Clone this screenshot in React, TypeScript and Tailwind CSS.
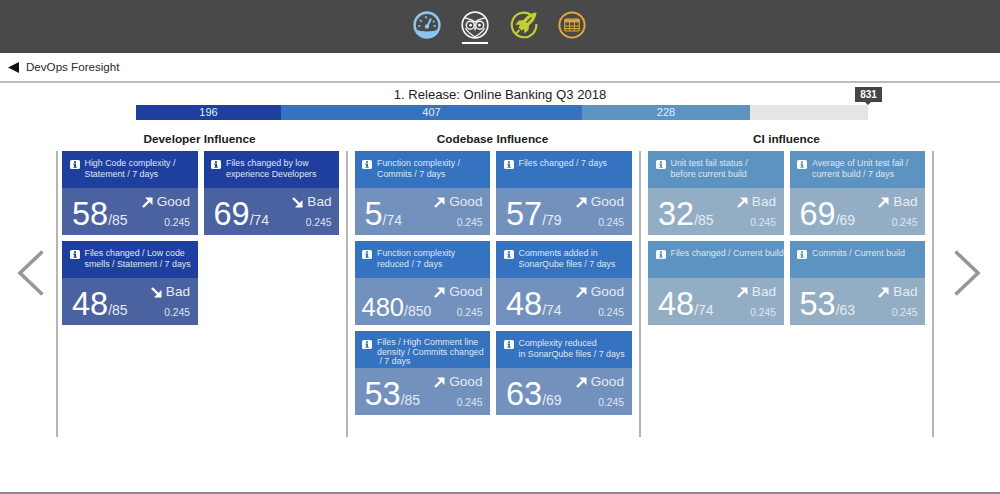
import React from "react";

type Card = { title: string; v: string; max: string; dir: "up" | "down"; label: string };

const Arrow = ({ dir }: { dir: "up" | "down" }) => (
  <svg width="11" height="11" viewBox="0 0 11 11" className="mr-[4px]">
    {dir === "up" ? (
      <>
        <path d="M1 10 L7 4" fill="none" stroke="#fff" strokeWidth="2.4" />
        <path d="M3 0.5 H10.5 V8 Z" fill="#fff" />
      </>
    ) : (
      <>
        <path d="M1 1 L7 7" fill="none" stroke="#fff" strokeWidth="2.4" />
        <path d="M3 10.5 H10.5 V3 Z" fill="#fff" />
      </>
    )}
  </svg>
);

const Info = () => (
  <svg width="10" height="9" viewBox="0 0 10 9" className="shrink-0 mt-[1.5px]">
    <rect x="0" y="0" width="10" height="9" rx="1.6" fill="#fff" />
    <rect x="4" y="1.2" width="2" height="1.6" fill="currentColor" />
    <path d="M3.4 3.6 H6 V6.7 H6.8 V7.8 H3.4 V6.7 H4.1 V4.7 H3.4 Z" fill="currentColor" />
  </svg>
);

const Tile = ({ c, head, body }: { c: Card; head: string; body: string }) => {
  const wide = c.v.length > 2;
  const threeLines = c.title.split("\n").length > 2;
  return (
    <div className="h-[84px] flex flex-col text-white">
      <div className={`h-[37px] flex gap-[5px] pl-[7.5px] pt-[7px] ${head}`}>
        <Info />
        <div className={`text-[8.85px] text-[#dfe6f2] whitespace-pre ${threeLines ? "leading-[9.6px]" : "leading-[10.7px]"}`}>{c.title}</div>
      </div>
      <div className={`h-[47px] flex justify-between pr-[7.5px] ${body} ${wide ? "pl-[7px]" : "pl-[10px]"}`}>
        <div className={`flex items-baseline ${wide ? "pt-[10.5px]" : "pt-[8px]"}`}>
          <span className={`leading-[36px] ${wide ? "text-[25.5px]" : "text-[32.5px]"}`}>{c.v}</span>
          <span className="text-[14px] text-[#e6ebf4]">/{c.max}</span>
        </div>
        <div className="flex flex-col items-end pt-[6px]">
          <div className="flex items-center text-[13.6px] leading-[16px] text-[#e6ebf4]">
            <Arrow dir={c.dir} />
            {c.label}
          </div>
          <div className="text-[10.3px] leading-[12px] mt-[7px] text-[#dfe6f2]">0.245</div>
        </div>
      </div>
    </div>
  );
};

const Column = ({
  title, cards, head, body, width, inner, titlePad, last,
}: { title: string; cards: Card[]; head: string; body: string; width: string; inner: string; titlePad?: string; last?: boolean }) => (
  <div className={width}>
    <div className={`h-[26px] text-center text-[11.8px] font-bold leading-[28px] text-[#1a1a1a] ${titlePad ?? ""}`}>{title}</div>
    <div className={`h-[286px] border-l-2 border-[#b5b5b5] ${inner} ${last ? "border-r-2" : ""}`}>
      <div className="grid grid-cols-[135.5px_135.5px] gap-[6px]">
        {cards.map((c, i) => (
          <Tile key={i} c={c} head={head} body={body} />
        ))}
      </div>
    </div>
  </div>
);

const dev: Card[] = [
  { title: "High Code complexity /\nStatement / 7 days", v: "58", max: "85", dir: "up", label: "Good" },
  { title: "Files changed by low\nexperience Developers", v: "69", max: "74", dir: "down", label: "Bad" },
  { title: "Files changed / Low code\nsmells / Statement / 7 days", v: "48", max: "85", dir: "down", label: "Bad" },
];
const code: Card[] = [
  { title: "Function complexity /\nCommits / 7 days", v: "5", max: "74", dir: "up", label: "Good" },
  { title: "Files changed / 7 days", v: "57", max: "79", dir: "up", label: "Good" },
  { title: "Function complexity\nreduced / 7 days", v: "480", max: "850", dir: "up", label: "Good" },
  { title: "Comments added in\nSonarQube files / 7 days", v: "48", max: "74", dir: "up", label: "Good" },
  { title: "Files / High Comment line\ndensity / Commits changed\n / 7 days", v: "53", max: "85", dir: "up", label: "Good" },
  { title: "Complexity reduced\nin SonarQube files / 7 days", v: "63", max: "69", dir: "up", label: "Good" },
];
const ci: Card[] = [
  { title: "Unit test fail status /\nbefore current build", v: "32", max: "85", dir: "up", label: "Bad" },
  { title: "Average of Unit test fail /\ncurrent build / 7 days", v: "69", max: "69", dir: "up", label: "Bad" },
  { title: "Files changed / Current build", v: "48", max: "74", dir: "up", label: "Bad" },
  { title: "Commits / Current build", v: "53", max: "63", dir: "up", label: "Bad" },
];

const Chevron = ({ right }: { right?: boolean }) => (
  <svg width="28" height="46" viewBox="0 0 28 46">
    <path d={right ? "M2.5 1.5 L25 23 L2.5 44.5" : "M25.5 1.5 L3 23 L25.5 44.5"} fill="none" stroke="#979797" strokeWidth="3.6" />
  </svg>
);

const Gauge = () => (
  <svg width="28" height="28" viewBox="0 0 28 28">
    <circle cx="14" cy="14" r="12.4" fill="none" stroke="#8cc4ec" strokeWidth="2.6" />
    <path d="M2.5 18.5 C8 21 20 21 25.5 18.5 C24 23.5 19 26.5 14 26.5 C9 26.5 4 23.5 2.5 18.5 Z" fill="#8cc4ec" />
    <path d="M14.5 15 L18 7.5" stroke="#8cc4ec" strokeWidth="2" />
    <circle cx="14" cy="15.5" r="2.2" fill="#8cc4ec" />
    <path d="M5 15 H7.5 M6.8 9.2 L8.8 10.6 M13 5 V7.5 M21.5 10 L19.8 11.2 M23 15 H20.5" stroke="#8cc4ec" strokeWidth="1.6" />
  </svg>
);
const Owl = () => (
  <svg width="28" height="28" viewBox="0 0 28 28">
    <circle cx="14" cy="14" r="12.8" fill="none" stroke="#f2f2f2" strokeWidth="1.7" />
    <path d="M3 6.5 C7 8 10.5 8 14 11 C17.5 8 21 8 25 6.5" fill="none" stroke="#f2f2f2" strokeWidth="1.5" />
    <path d="M4.5 17 C6 21 10 23 14 26 C18 23 22 21 23.5 17" fill="none" stroke="#f2f2f2" strokeWidth="1.3" />
    <circle cx="9.3" cy="14.2" r="4" fill="none" stroke="#f2f2f2" strokeWidth="1.5" />
    <circle cx="18.7" cy="14.2" r="4" fill="none" stroke="#f2f2f2" strokeWidth="1.5" />
    <circle cx="9.6" cy="14.2" r="1.4" fill="#f2f2f2" />
    <circle cx="18.4" cy="14.2" r="1.4" fill="#f2f2f2" />
    <path d="M14 15 L13 17.5 L14 20.5 L15 17.5 Z" fill="#f2f2f2" />
  </svg>
);
const Rocket = () => (
  <svg width="28" height="28" viewBox="0 0 28 28">
    <path d="M20.5 3.5 A12.3 12.3 0 1 0 26.3 13" fill="none" stroke="#c3cf2e" strokeWidth="2.1" />
    <path d="M26.5 1.5 C21 2 16.5 5 13.5 9 L9 9.5 L5.5 13.5 L10 14 L8.5 16.5 L11.5 19.5 L14 18 L14.5 22.5 L18.5 19 L19 14.5 C23 11.5 26 7 26.5 1.5 Z" fill="#c3cf2e" />
    <path d="M16.5 11.5 L21.5 6.5" stroke="#494949" strokeWidth="1.4" />
    <path d="M6 22.5 L9.5 19" stroke="#c3cf2e" strokeWidth="1.8" />
  </svg>
);
const Table = () => (
  <svg width="28" height="28" viewBox="0 0 28 28">
    <circle cx="14" cy="14" r="12.6" fill="none" stroke="#e4a63a" strokeWidth="2" />
    <rect x="6.8" y="8" width="14.4" height="12" rx="1" fill="none" stroke="#e4a63a" strokeWidth="1.2" />
    <path d="M6.8 8.3 H21.2 V11.4 H6.8 Z" fill="#e4a63a" />
    <path d="M7 15 H21 M7 17.6 H21 M11.6 11 V20 M16.4 11 V20" stroke="#e4a63a" strokeWidth="1" />
  </svg>
);

export default function App() {
  return (
    <div className="w-[1000px] h-[494px] overflow-hidden bg-white flex flex-col border-b-2 border-[#8a8a8a]" style={{ fontFamily: '"Liberation Sans", Arial, sans-serif' }}>
      <header className="h-[53px] bg-[#494949] flex justify-center items-start gap-[20.5px] pr-[1px] pt-[10.5px] shrink-0">
        <Gauge />
        <div className="flex flex-col items-center gap-[3px]">
          <Owl />
          <div className="w-[26px] h-[2px] bg-white" />
        </div>
        <Rocket />
        <Table />
      </header>
      <div className="h-[30px] shrink-0 border-b-2 border-[#bcbcbc] flex items-center pl-[8px] gap-[7px] text-[11.6px] text-[#2a2a2a]">
        <svg width="11" height="11" viewBox="0 0 11 11"><path d="M0 5.5 L11 0 V11 Z" fill="#111" /></svg>
        DevOps Foresight
      </div>
      <div className="pt-[3px] relative">
        <div className="h-[19px] text-center text-[13.1px] leading-[18px] text-[#222]">1. Release: Online Banking Q3 2018</div>
        <div className="ml-[136px] w-[732px] h-[15px] flex text-[11px] leading-[15px] text-center text-[#e6ebf4] relative">
          <div className="w-[145px] bg-[#1f3f9f]">196</div>
          <div className="w-[301px] bg-[#3572c0]">407</div>
          <div className="w-[168px] bg-[#5d93c0]">228</div>
          <div className="flex-1 bg-[#e4e5e5]" />
          <div className="absolute right-[-14px] top-[-18px] w-[27px] h-[15px] bg-[#454545] text-white text-[10px] font-bold leading-[15px]">
            831
            <div className="absolute left-[10px] top-[15px] w-0 h-0 border-x-[3.5px] border-t-[3px] border-x-transparent border-t-[#454545]" />
          </div>
        </div>
        <div className="flex mt-[5px]">
          <div className="w-[56px] flex justify-center items-start pt-[125px] pl-[6px]"><Chevron /></div>
          <Column title="Developer Influence" cards={dev} head="bg-[#1f3f9f] text-[#1f3f9f]" body="bg-[#4a62a0]" width="w-[290px]" inner="pl-[4px]" titlePad="pr-[3px]" />
          <Column title="Codebase Influence" cards={code} head="bg-[#3572c0] text-[#3572c0]" body="bg-[#7391bd]" width="w-[293px]" inner="pl-[6.5px]" />
          <Column title="CI influence" cards={ci} head="bg-[#5d93c0] text-[#5d93c0]" body="bg-[#93aec4]" width="w-[295px]" inner="pl-[7px]" last />
          <div className="flex-1 flex justify-center items-start pt-[125px]"><Chevron right /></div>
        </div>
      </div>
    </div>
  );
}
